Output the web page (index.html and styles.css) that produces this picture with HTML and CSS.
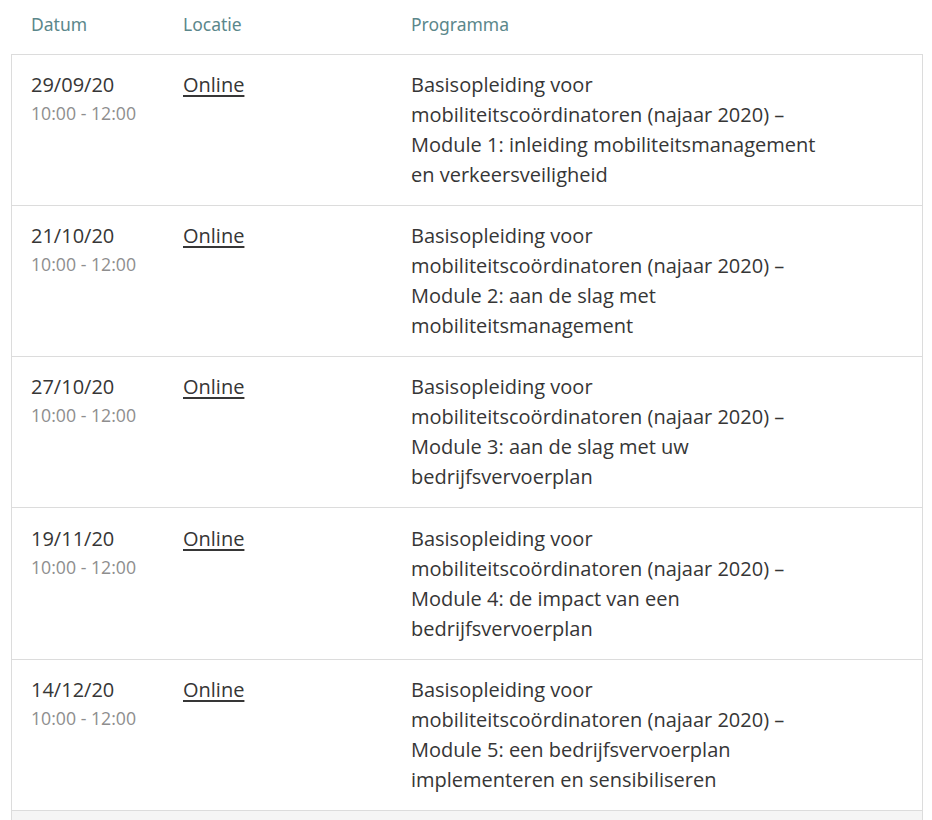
FILE: index.html
```html
<!DOCTYPE html>
<html lang="nl">
<head>
<meta charset="utf-8">
<title>Agenda</title>
<link rel="stylesheet" href="styles.css">
</head>
<body>
<div class="agenda">
  <div class="head">
    <div class="hcell">Datum</div>
    <div class="hcell">Locatie</div>
    <div class="hcell">Programma</div>
  </div>
  <div class="rows">
    <div class="row">
      <div class="date">29/09/20<span class="time">10:00 - 12:00</span></div>
      <div class="loc"><a href="#">Online</a></div>
      <div class="prog">Basisopleiding voor mobiliteitscoördinatoren (najaar 2020) – Module 1: inleiding mobiliteitsmanagement en verkeersveiligheid</div>
    </div>
    <div class="row">
      <div class="date">21/10/20<span class="time">10:00 - 12:00</span></div>
      <div class="loc"><a href="#">Online</a></div>
      <div class="prog">Basisopleiding voor mobiliteitscoördinatoren (najaar 2020) – Module 2: aan de slag met mobiliteitsmanagement</div>
    </div>
    <div class="row">
      <div class="date">27/10/20<span class="time">10:00 - 12:00</span></div>
      <div class="loc"><a href="#">Online</a></div>
      <div class="prog">Basisopleiding voor mobiliteitscoördinatoren (najaar 2020) – Module 3: aan de slag met uw bedrijfsvervoerplan</div>
    </div>
    <div class="row tall">
      <div class="date">19/11/20<span class="time">10:00 - 12:00</span></div>
      <div class="loc"><a href="#">Online</a></div>
      <div class="prog">Basisopleiding voor mobiliteitscoördinatoren (najaar 2020) – Module 4: de impact van een bedrijfsvervoerplan</div>
    </div>
    <div class="row">
      <div class="date">14/12/20<span class="time">10:00 - 12:00</span></div>
      <div class="loc"><a href="#">Online</a></div>
      <div class="prog">Basisopleiding voor mobiliteitscoördinatoren (najaar 2020) – Module 5: een bedrijfsvervoerplan implementeren en sensibiliseren</div>
    </div>
    <div class="row filler"></div>
  </div>
</div>
</body>
</html>
```
FILE: styles.css
```css
html, body {
  margin: 0;
  padding: 0;
  background: #ffffff;
}
body {
  font-family: "Open Sans", "Liberation Sans", sans-serif;
  color: #363636;
  overflow: hidden;
}
.agenda {
  padding: 0 9px 0 11px;
}
.head {
  display: grid;
  grid-template-columns: 152px 228px 1fr;
  height: 54px;
  align-items: center;
  border-bottom: 1px solid #dcdcdc;
}
.hcell {
  padding-left: 20px;
  font-family: "Noto Sans", "Open Sans", sans-serif;
  font-size: 17.5px;
  color: #5b878b;
  line-height: 24px;
  padding-bottom: 6px;
}
.rows {
  border-left: 1px solid #dcdcdc;
  border-right: 1px solid #dcdcdc;
}
.row {
  display: grid;
  grid-template-columns: 151px 228px 1fr;
  height: 151px;
  box-sizing: border-box;
  padding-top: 15px;
  border-bottom: 1px solid #dcdcdc;
  font-size: 20px;
  line-height: 30px;
}
.row.tall {
  height: 152px;
  padding-top: 16px;
}
.row > div {
  padding-left: 20px;
}
.row > .date {
  padding-left: 19px;
}
.date {
  display: flex;
  flex-direction: column;
}
.time {
  font-size: 17.7px;
  line-height: 27px;
  color: #8e8e8e;
}
.loc a {
  color: #363636;
  text-decoration: underline;
  text-underline-offset: 3px;
}
.prog {
  max-width: 412px;
}
.filler {
  background: #f5f5f5;
  height: 40px;
}
```
